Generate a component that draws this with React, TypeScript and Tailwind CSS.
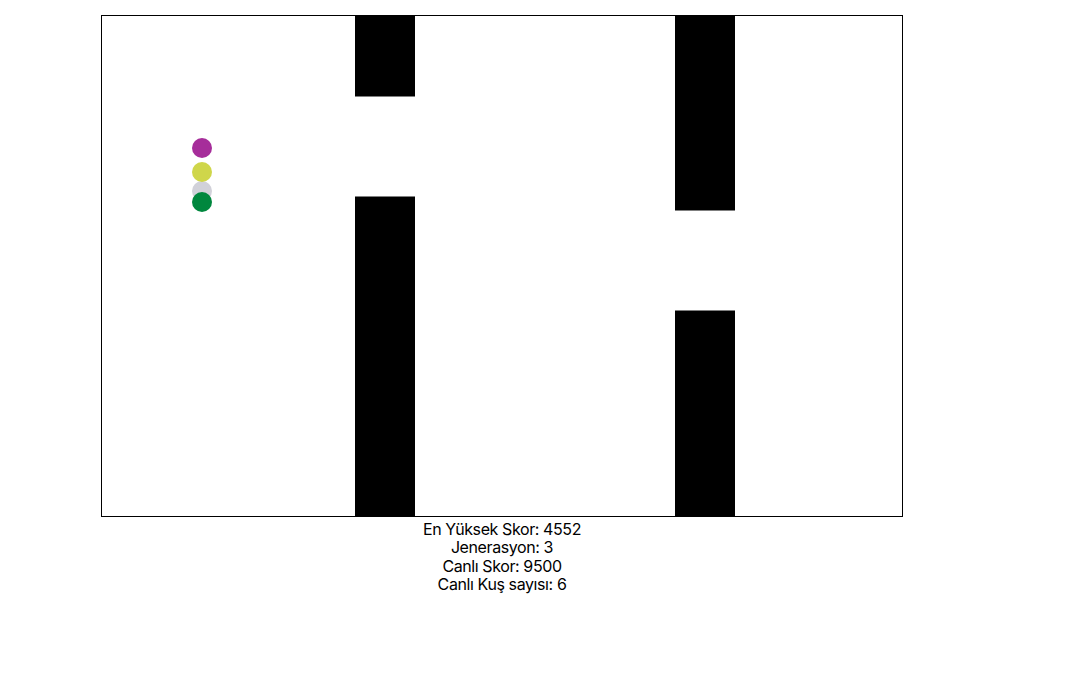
import React from "react"

// Oyun alanı: 800x500, borular ve kuşlar
const pipes = [
  { x: 253, top: 80.5, gap: 100 },
  { x: 573, top: 194.5, gap: 100 },
]

const birds = [
  { y: 175, color: "#d1d1d9" },
  { y: 132, color: "#a62d9a" },
  { y: 156, color: "#cfd64a" },
  { y: 186, color: "#00873e" },
]

const stats = [
  "En Yüksek Skor: 4552",
  "Jenerasyon: 3",
  "Canlı Skor: 9500",
  "Canlı Kuş sayısı: 6",
]

export default function App() {
  return (
    <div className="min-h-screen bg-white pl-[101px] pt-[15px] font-['Inter','Liberation_Sans',sans-serif] text-black">
      <div className="flex w-fit flex-col items-center">
        <div className="border border-black">
          <svg width="800" height="500" viewBox="0 0 800 500" className="block">
            <rect width="800" height="500" fill="#fff" />
            {pipes.map((p) => (
              <g key={p.x}>
                <rect x={p.x} y={0} width={60} height={p.top} fill="#000" />
                <rect x={p.x} y={p.top + p.gap} width={60} height={500 - p.top - p.gap} fill="#000" />
              </g>
            ))}
            {birds.map((b, i) => (
              <circle key={i} cx={100} cy={b.y} r={10} fill={b.color} />
            ))}
          </svg>
        </div>
        <div className="pt-[3px] text-center text-[16px] leading-[18.3px] tracking-[-0.4px]">
          {stats.map((s) => (
            <div key={s}>{s}</div>
          ))}
        </div>
      </div>
    </div>
  )
}
